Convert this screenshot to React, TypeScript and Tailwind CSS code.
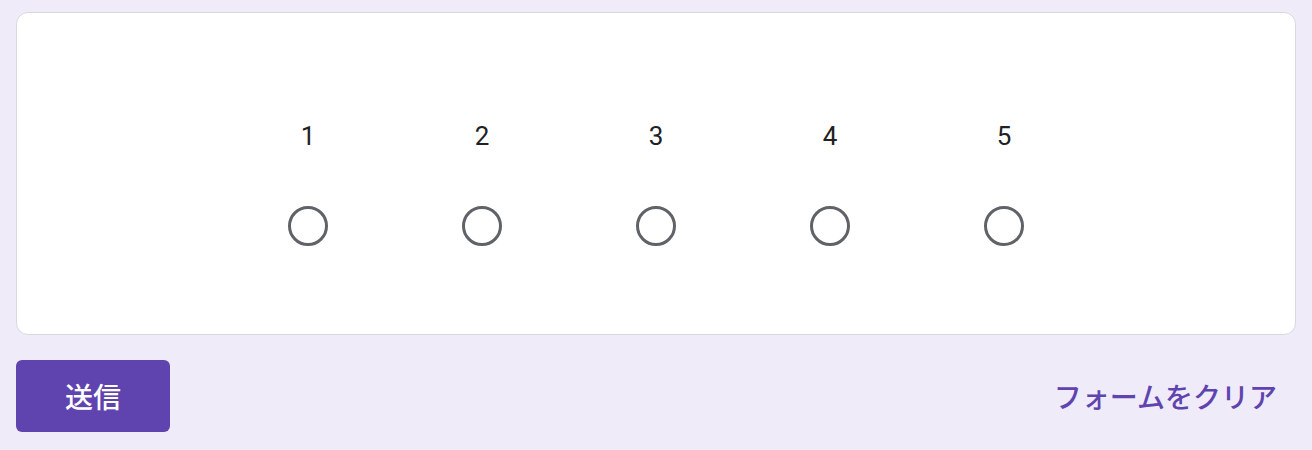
const choices = [1, 2, 3, 4, 5];

export default function App() {
  return (
    <div className="min-h-[450px] w-full bg-[#efebf8] px-4 pt-3 font-['Roboto','Noto_Sans_CJK_JP',sans-serif]">
      {/* Linear scale card */}
      <div className="h-[323px] rounded-[12px] border border-[#d9d8de] bg-white pt-[108px]">
        <div className="flex justify-center">
          {choices.map((n) => (
            <label key={n} className="flex w-[174px] flex-col items-center">
              <span className="text-[26px] leading-[30px] text-[#202124]">{n}</span>
              <span className="mt-[55px] h-10 w-10 rounded-full border-[3px] border-[#5f6368]" />
            </label>
          ))}
        </div>
      </div>

      {/* Actions */}
      <div className="mt-[25px] flex items-center justify-between">
        <button className="h-[72px] w-[154px] rounded-md bg-[#5f44b0] text-[28px] font-medium text-white font-['Noto_Sans_CJK_JP',sans-serif]">
          送信
        </button>
        <button className="pr-[19px] text-[28px] font-medium text-[#5f44b0] font-['Noto_Sans_CJK_JP',sans-serif]">
          フォームをクリア
        </button>
      </div>
    </div>
  );
}
